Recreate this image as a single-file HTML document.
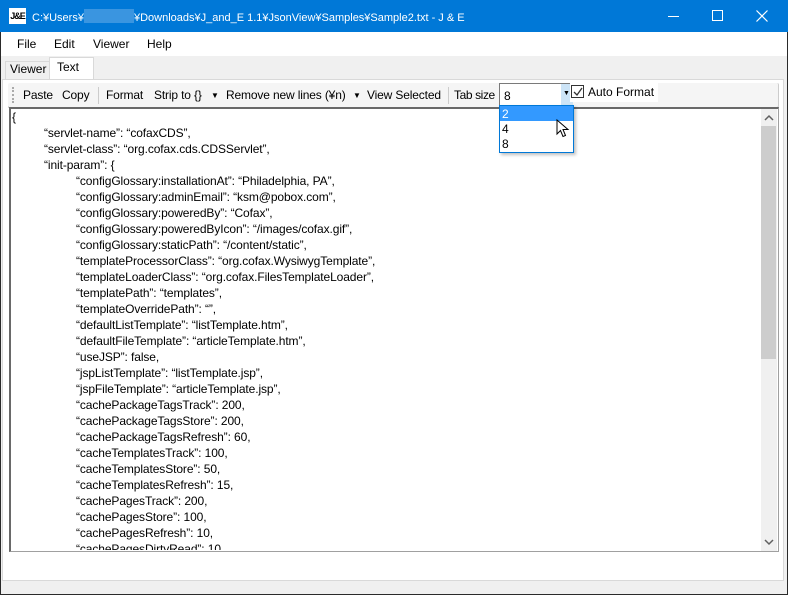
<!DOCTYPE html>
<html><head><meta charset="utf-8"><style>
*{margin:0;padding:0;box-sizing:border-box}
body{width:788px;height:595px;background:#f0f0f0;font-family:"Liberation Sans","Noto Sans CJK JP",sans-serif;font-size:12px;color:#000;position:relative;overflow:hidden}
.abs{position:absolute}
#win{position:absolute;left:0;top:0;width:788px;height:595px;border:1px solid #2a2a2a;border-top:none}
#title{left:0;top:0;width:788px;height:32px;background:#0078d7;color:#fff;font-size:11px}
#menu{left:1px;top:32px;width:786px;height:24px;background:#fff}
.mi{position:absolute;top:5px;font-size:12px}
.tb{position:absolute;top:88px;font-size:12px;white-space:nowrap;letter-spacing:-0.15px}
.c{height:16px;line-height:16px;font-size:12px;white-space:pre;letter-spacing:-0.1px}
.i1{padding-left:33px}.i2{padding-left:65px}
</style></head><body>
<div id="win"></div>
<div class="abs" id="title">
 <div class="abs" style="left:9px;top:8px;width:17px;height:16px;background:#fff;color:#000;font-size:9px;line-height:16px;text-align:center;font-weight:bold;letter-spacing:-1px">J&amp;E</div>
 <div class="abs" style="left:32px;top:9px;white-space:nowrap">C:¥Users¥<span style="display:inline-block;width:50px;height:14px;background:#3a95e0;vertical-align:-2px"></span>¥Downloads¥J_and_E 1.1¥JsonView¥Samples¥Sample2.txt - J &amp; E</div>
 <div class="abs" style="left:668px;top:16px;width:11px;height:1px;background:#fff"></div>
 <div class="abs" style="left:712px;top:10px;width:11px;height:11px;border:1px solid #fff"></div>
 <svg class="abs" style="left:756px;top:10px" width="12" height="12"><path d="M0.5 0.5L11.5 11.5M11.5 0.5L0.5 11.5" stroke="#fff" stroke-width="1.2"/></svg>
</div>
<div class="abs" id="menu">
 <span class="mi" style="left:16px">File</span><span class="mi" style="left:53px">Edit</span><span class="mi" style="left:92px">Viewer</span><span class="mi" style="left:146px">Help</span>
</div>
<div class="abs" style="left:1px;top:56px;width:786px;height:24px;background:#f0f0f0"></div>
<div class="abs" style="left:5px;top:61px;width:45px;height:18px;border:1px solid #d9d9d9;border-bottom:none;background:#f0f0f0"></div>
<span class="abs" style="left:10px;top:62px">Viewer</span>
<div class="abs" style="left:49px;top:57px;width:45px;height:23px;border:1px solid #d9d9d9;border-bottom:none;background:#fff"></div>
<span class="abs" style="left:57px;top:60px">Text</span>
<div class="abs" style="left:2px;top:79px;width:782px;height:502px;background:#fff;border:1px solid #d9d9d9"></div>
<div class="abs" style="left:8px;top:83px;width:771px;height:25px;background:#f5f5f5;border-radius:2px;border-right:1px solid #ccc;border-bottom:1px solid #888"></div>
<div class="abs" style="left:12px;top:87px;width:2px;height:16px;border-left:2px dotted #aaa"></div>
<span class="tb" style="left:23px">Paste</span><span class="tb" style="left:62px">Copy</span>
<div class="abs" style="left:98px;top:87px;width:1px;height:17px;background:#ccc"></div>
<span class="tb" style="left:106px">Format</span><span class="tb" style="left:154px">Strip to {}</span>
<span class="tb" style="left:211px;font-size:8px;top:91px">▼</span>
<span class="tb" style="left:226px">Remove new lines (¥n)</span>
<span class="tb" style="left:353px;font-size:8px;top:91px">▼</span>
<span class="tb" style="left:367px">View Selected</span>
<div class="abs" style="left:448px;top:87px;width:1px;height:17px;background:#ccc"></div>
<span class="tb" style="left:454px;letter-spacing:-0.4px">Tab size</span>
<div class="abs" style="left:499px;top:83px;width:74px;height:23px;background:#fff;border:1px solid #7a7a7a"></div>
<div class="abs" style="left:561px;top:84px;width:12px;height:21px;background:#cce4f7"></div>
<span class="abs" style="left:563px;top:90px;font-size:7px">▼</span>
<span class="abs" style="left:504px;top:89px;font-size:12px">8</span>
<div class="abs" style="left:570px;top:83px;width:88px;height:19px;background:#fff"></div>
<div class="abs" style="left:571px;top:85px;width:13px;height:13px;border:1px solid #333;background:#fff"></div>
<svg class="abs" style="left:572px;top:86px" width="12" height="12"><path d="M2 6L5 9L10 2" stroke="#333" stroke-width="1.3" fill="none"/></svg>
<span class="abs" style="left:588px;top:85px">Auto Format</span>
<div class="abs" style="left:9px;top:107px;width:770px;height:445px;background:#fff;border:1px solid #a0a0a0;border-left:2px solid #696969;border-top:2px solid #696969"></div>
<div class="abs" style="left:761px;top:109px;width:16px;height:442px;background:#f0f0f0"></div>
<div class="abs" style="left:761px;top:126px;width:15px;height:233px;background:#cdcdcd"></div>
<svg class="abs" style="left:764px;top:114px" width="10" height="8"><path d="M1 6L5 2L9 6" stroke="#606060" stroke-width="1.5" fill="none"/></svg>
<svg class="abs" style="left:764px;top:538px" width="10" height="8"><path d="M1 2L5 6L9 2" stroke="#606060" stroke-width="1.5" fill="none"/></svg>
<div class="abs" style="left:11px;top:109px;width:748px;height:441px;overflow:hidden">
<div class="c" style="padding-left:1px">{</div>
<div class="c i1">“servlet-name”: “cofaxCDS”,</div>
<div class="c i1">“servlet-class”: “org.cofax.cds.CDSServlet”,</div>
<div class="c i1">“init-param”: {</div>
<div class="c i2">“configGlossary:installationAt”: “Philadelphia, PA”,</div>
<div class="c i2">“configGlossary:adminEmail”: “ksm@pobox.com”,</div>
<div class="c i2">“configGlossary:poweredBy”: “Cofax”,</div>
<div class="c i2">“configGlossary:poweredByIcon”: “/images/cofax.gif”,</div>
<div class="c i2">“configGlossary:staticPath”: “/content/static”,</div>
<div class="c i2">“templateProcessorClass”: “org.cofax.WysiwygTemplate”,</div>
<div class="c i2">“templateLoaderClass”: “org.cofax.FilesTemplateLoader”,</div>
<div class="c i2">“templatePath”: “templates”,</div>
<div class="c i2">“templateOverridePath”: “”,</div>
<div class="c i2">“defaultListTemplate”: “listTemplate.htm”,</div>
<div class="c i2">“defaultFileTemplate”: “articleTemplate.htm”,</div>
<div class="c i2">“useJSP”: false,</div>
<div class="c i2">“jspListTemplate”: “listTemplate.jsp”,</div>
<div class="c i2">“jspFileTemplate”: “articleTemplate.jsp”,</div>
<div class="c i2">“cachePackageTagsTrack”: 200,</div>
<div class="c i2">“cachePackageTagsStore”: 200,</div>
<div class="c i2">“cachePackageTagsRefresh”: 60,</div>
<div class="c i2">“cacheTemplatesTrack”: 100,</div>
<div class="c i2">“cacheTemplatesStore”: 50,</div>
<div class="c i2">“cacheTemplatesRefresh”: 15,</div>
<div class="c i2">“cachePagesTrack”: 200,</div>
<div class="c i2">“cachePagesStore”: 100,</div>
<div class="c i2">“cachePagesRefresh”: 10,</div>
<div class="c i2">“cachePagesDirtyRead”: 10,</div>
</div>
<div class="abs" style="left:499px;top:105px;width:75px;height:48px;background:#fff;border:1px solid #0078d7;box-shadow:2px 2px 3px rgba(0,0,0,.25)"></div>
<div class="abs" style="left:500px;top:106px;width:73px;height:15px;background:#3399ff"></div>
<span class="abs" style="left:502px;top:107px;color:#fff;font-size:12px">2</span>
<span class="abs" style="left:502px;top:122px;font-size:12px">4</span>
<span class="abs" style="left:502px;top:137px;font-size:12px">8</span>
<svg class="abs" style="left:556px;top:119px" width="14" height="20"><path d="M1 1L1 15L4.5 11.5L7 17.5L9.5 16.5L7 10.5L12 10.5Z" fill="#fff" stroke="#000" stroke-width="1"/></svg>
</body></html>
